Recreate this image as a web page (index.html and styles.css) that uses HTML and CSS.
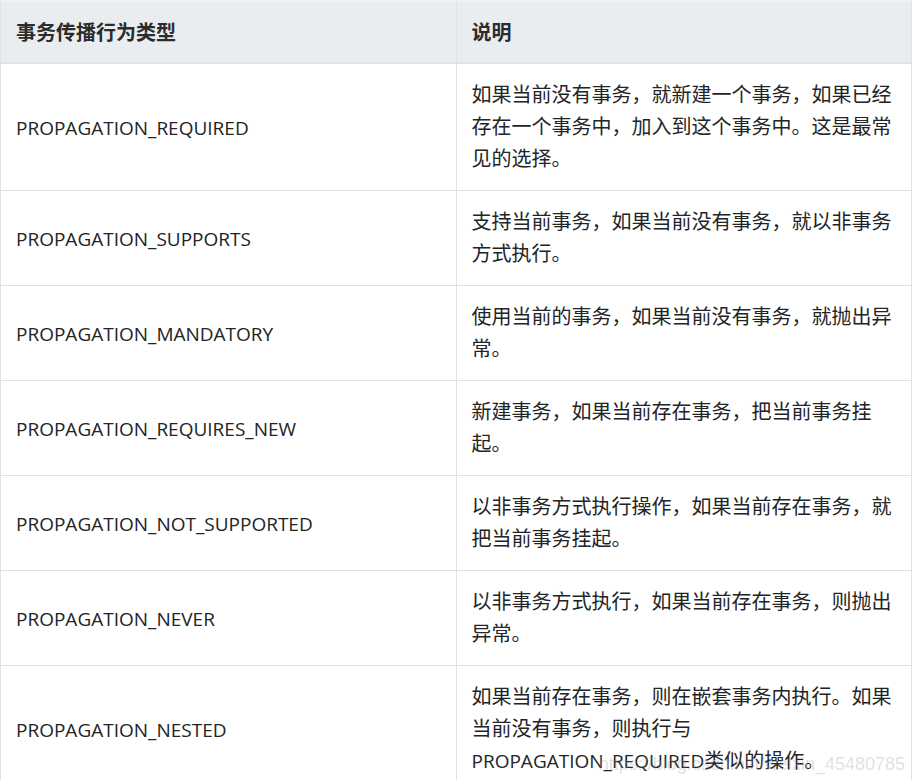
FILE: index.html
```html
<!DOCTYPE html>
<html lang="zh-CN">
<head>
<meta charset="utf-8">
<title>事务传播行为类型</title>
<link rel="stylesheet" href="styles.css">
</head>
<body>
<div class="wrap">
<table class="tbl">
  <thead>
    <tr><th>事务传播行为类型</th><th>说明</th></tr>
  </thead>
  <tbody>
    <tr><td class="en">PROPAGATION_REQUIRED</td><td>如果当前没有事务，就新建一个事务，如果已经存在一个事务中，加入到这个事务中。这是最常见的选择。</td></tr>
    <tr><td class="en">PROPAGATION_SUPPORTS</td><td>支持当前事务，如果当前没有事务，就以非事务方式执行。</td></tr>
    <tr><td class="en">PROPAGATION_MANDATORY</td><td>使用当前的事务，如果当前没有事务，就抛出异常。</td></tr>
    <tr><td class="en">PROPAGATION_REQUIRES_NEW</td><td>新建事务，如果当前存在事务，把当前事务挂起。</td></tr>
    <tr><td class="en">PROPAGATION_NOT_SUPPORTED</td><td>以非事务方式执行操作，如果当前存在事务，就把当前事务挂起。</td></tr>
    <tr><td class="en">PROPAGATION_NEVER</td><td>以非事务方式执行，如果当前存在事务，则抛出异常。</td></tr>
    <tr><td class="en">PROPAGATION_NESTED</td><td>如果当前存在事务，则在嵌套事务内执行。如果当前没有事务，则执行与<span class="en">PROPAGATION_REQUIRED</span>类似的操作。</td></tr>
  </tbody>
</table>
<div class="watermark">https://blog.csdn.net/weixin_45480785</div>
</div>
</body>
</html>
```
FILE: styles.css
```css
html, body {
  margin: 0;
  padding: 0;
  background: #ffffff;
}
body {
  font-family: "Open Sans", "Noto Sans CJK SC", sans-serif;
  color: #222426;
  overflow: hidden;
}
.wrap {
  position: relative;
  width: 913px;
  height: 780px;
  overflow: hidden;
}
.tbl {
  border-collapse: collapse;
  table-layout: fixed;
  width: 912px;
  font-size: 20px;
  line-height: 32px;
}
.tbl th, .tbl td {
  width: 50%;
  border: 1px solid #dfe2e5;
  padding: 15px 15px;
  text-align: left;
  vertical-align: middle;
}
.tbl th {
  background: #eaedf0;
  font-weight: 700;
  font-family: "Noto Sans CJK SC", sans-serif;
  color: #2c2c2c;
  padding: 14px 15px 14px;
  border-bottom: 2px solid #dfe2e5;
  border-top: 2px solid #eef0f2;
}
.tbl td {
  font-weight: 400;
}
.tbl td.en {
  padding-top: 16px;
  padding-bottom: 14px;
}
.en {
  font-size: 19px;
}
.watermark {
  position: absolute;
  right: 8px;
  bottom: 5px;
  font-family: "Liberation Sans", sans-serif;
  font-size: 18px;
  color: rgba(150, 150, 150, 0.3);
  pointer-events: none;
}
```
